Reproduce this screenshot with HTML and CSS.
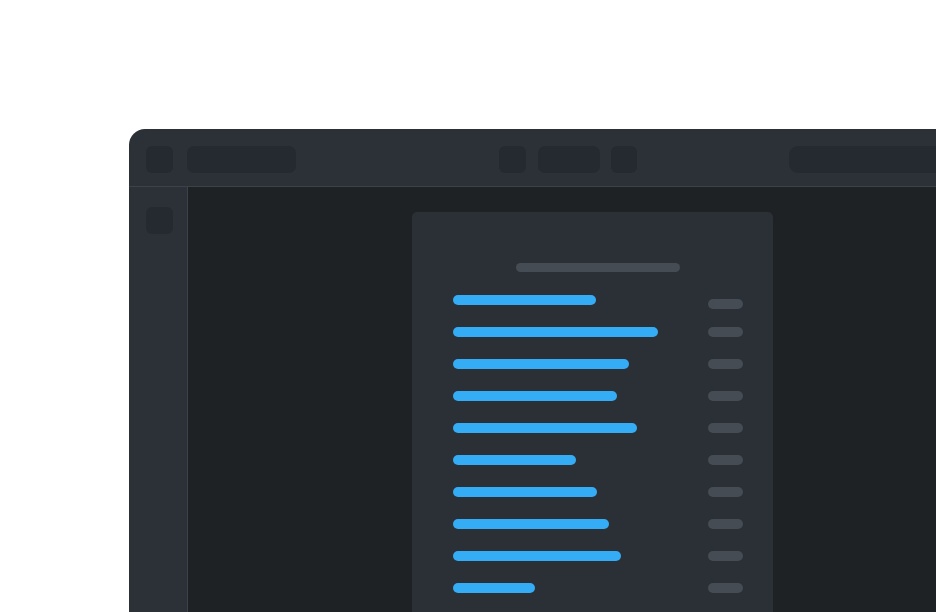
FILE: index.html
```html
<!DOCTYPE html>
<html>
<head>
<meta charset="utf-8">
<link rel="stylesheet" href="styles.css">
</head>
<body>
<div class="window">
  <div class="titlebar">
    <div class="group">
      <div class="tb-sq"></div>
      <div class="tb-pill tb-pill-left"></div>
    </div>
    <div class="group group-center">
      <div class="tb-sq"></div>
      <div class="tb-pill tb-pill-mid"></div>
      <div class="tb-sq tb-sq-narrow"></div>
    </div>
    <div class="tb-pill tb-pill-right"></div>
  </div>
  <div class="body">
    <div class="sidebar">
      <div class="tb-sq"></div>
    </div>
    <div class="main">
      <div class="card">
        <div class="card-title"></div>
        <div class="rows">
          <div class="row"><div class="bar" style="width:143px"></div><div class="val val-first"></div></div>
          <div class="row"><div class="bar" style="width:205px"></div><div class="val"></div></div>
          <div class="row"><div class="bar" style="width:176px"></div><div class="val"></div></div>
          <div class="row"><div class="bar" style="width:164px"></div><div class="val"></div></div>
          <div class="row"><div class="bar" style="width:184px"></div><div class="val"></div></div>
          <div class="row"><div class="bar" style="width:123px"></div><div class="val"></div></div>
          <div class="row"><div class="bar" style="width:144px"></div><div class="val"></div></div>
          <div class="row"><div class="bar" style="width:156px"></div><div class="val"></div></div>
          <div class="row"><div class="bar" style="width:168px"></div><div class="val"></div></div>
          <div class="row"><div class="bar" style="width:82px"></div><div class="val"></div></div>
        </div>
      </div>
    </div>
  </div>
</div>
</body>
</html>
```
FILE: styles.css
```css
html, body {
  margin: 0;
  padding: 0;
  background: #ffffff;
  width: 936px;
  height: 612px;
  overflow: hidden;
  font-family: "Liberation Sans", Arial, sans-serif;
}

.window {
  margin: 129px 0 0 129px;
  width: 807px;
  height: 483px;
  background: #2c3138;
  border-top-left-radius: 16px;
  overflow: hidden;
  display: flex;
  flex-direction: column;
}

.titlebar {
  height: 58px;
  box-sizing: border-box;
  padding: 17px 0 0 17px;
  display: flex;
  align-items: flex-start;
  border-bottom: 1px solid #3b424a;
  flex-shrink: 0;
  overflow: hidden;
}

.group {
  display: flex;
  gap: 14px;
  flex-shrink: 0;
}

.group-center {
  margin-left: 203px;
  gap: 12px;
}

.tb-sq {
  width: 27px;
  height: 27px;
  border-radius: 6px;
  background: #252a30;
  flex-shrink: 0;
}

.tb-sq-narrow {
  width: 26px;
}

.tb-pill {
  height: 27px;
  border-radius: 7px;
  background: #252a30;
  flex-shrink: 0;
}

.tb-pill-left { width: 109px; }
.tb-pill-mid { width: 62px; margin-right: -1px; }
.tb-pill-right {
  width: 160px;
  margin-left: 152px;
  border-radius: 9px 0 0 9px;
}

.body {
  flex: 1;
  display: flex;
  min-height: 0;
}

.sidebar {
  width: 59px;
  box-sizing: border-box;
  padding: 20px 0 0 17px;
  border-right: 1px solid #3b424a;
  flex-shrink: 0;
}

.main {
  flex: 1;
  background: #1f2225;
  padding: 25px 0 0 224px;
  display: flex;
  min-height: 0;
}

.card {
  width: 361px;
  box-sizing: border-box;
  background: #2b3036;
  border-radius: 5px 5px 0 0;
  padding: 51px 30px 0 41px;
}

.card-title {
  width: 164px;
  height: 9px;
  border-radius: 5px;
  background: #454c54;
  margin-left: 63px;
}

.rows {
  margin-top: 12px;
  display: flex;
  flex-direction: column;
}

.row {
  height: 32px;
  display: flex;
  align-items: center;
  justify-content: space-between;
}

.bar {
  height: 10px;
  border-radius: 5px;
  background: #34adf6;
}

.val {
  width: 35px;
  height: 10px;
  border-radius: 5px;
  background: #454c54;
}

.val-first {
  margin-top: 8px;
}
```
